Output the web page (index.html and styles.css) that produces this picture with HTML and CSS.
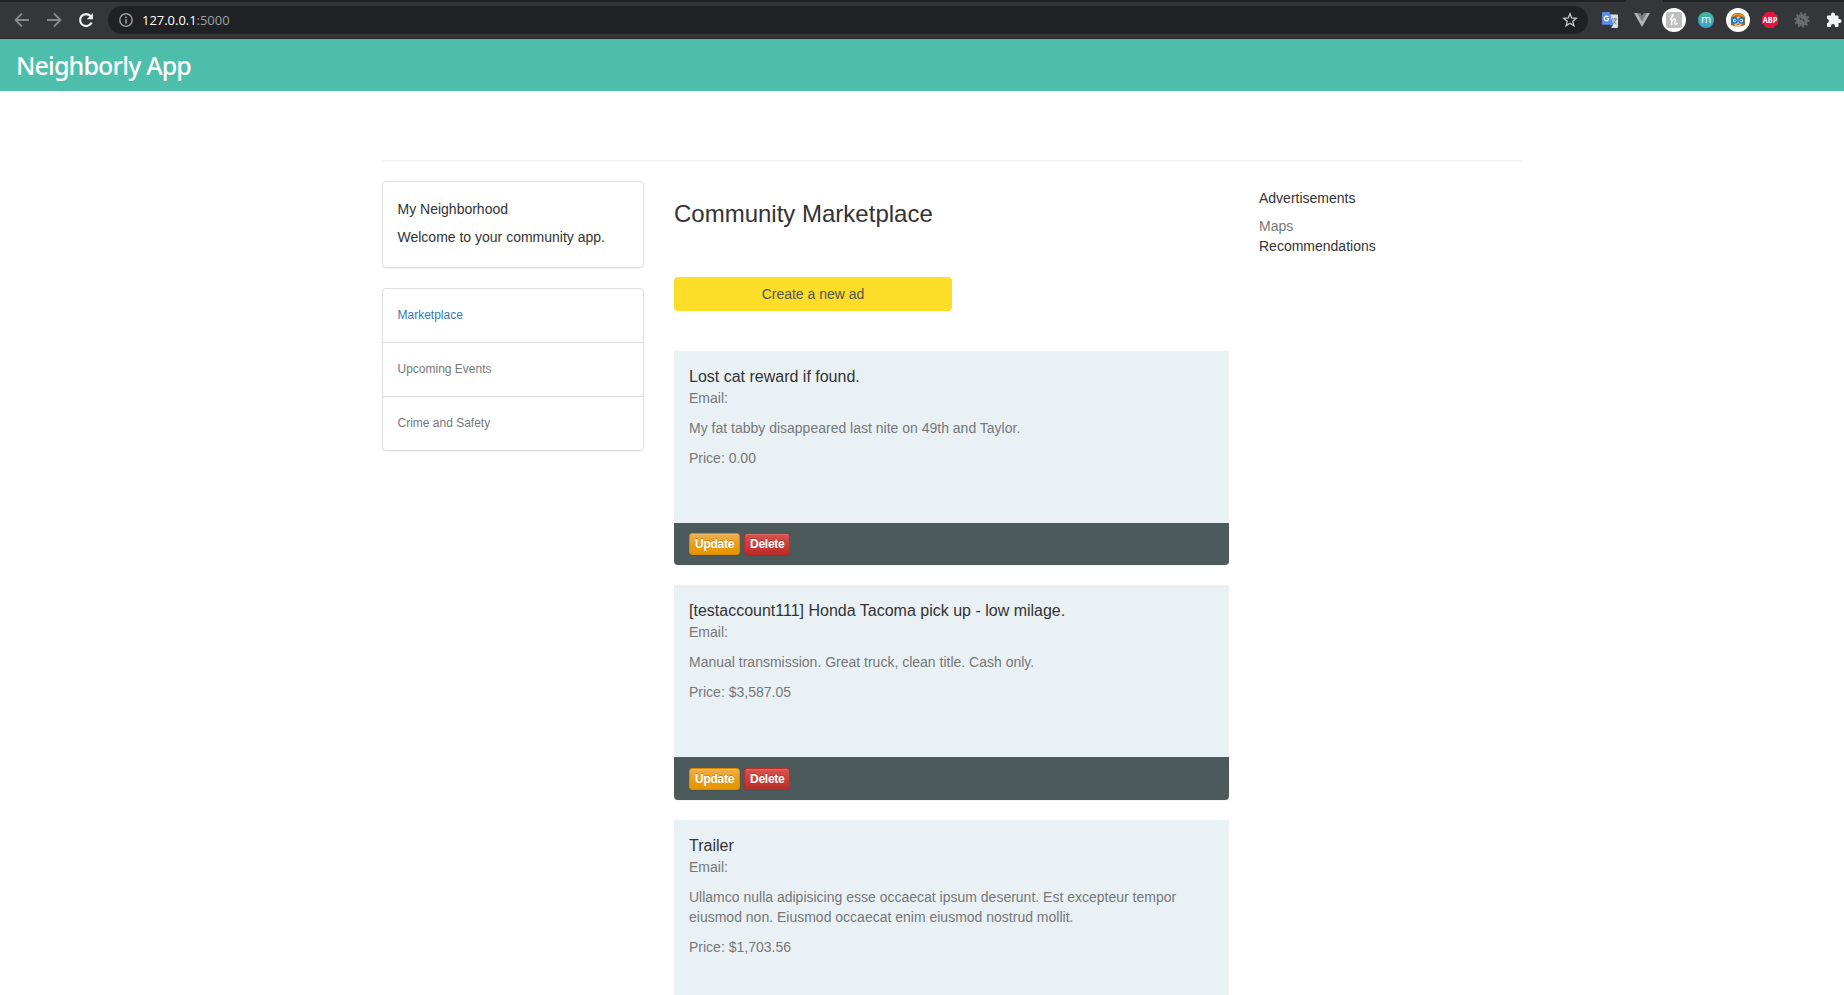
FILE: index.html
```html
<!DOCTYPE html>
<html lang="en">
<head>
<meta charset="utf-8">
<title>Neighborly App</title>
<link rel="stylesheet" href="styles.css">
</head>
<body>
<div class="toolbar">
  <svg class="icon back" viewBox="0 0 16 16"><path d="M15 8H2M8 1.5L1.5 8L8 14.5" fill="none" stroke="#87898c" stroke-width="1.8"/></svg>
  <svg class="icon fwd" viewBox="0 0 16 16"><path d="M1 8H14M8 1.5L14.500 8L8 14.500" fill="none" stroke="#87898c" stroke-width="1.8"/></svg>
  <svg class="icon reload" viewBox="0 0 16 16"><path d="M13.600 10.500A6 6 0 1 1 12.500 4" fill="none" stroke="#f1f3f4" stroke-width="2.100"/><path d="M15 1V7.200H8.800Z" fill="#f1f3f4"/></svg>
  <div class="omnibox">
    <svg class="icon info" viewBox="0 0 16 16"><circle cx="8" cy="8" r="6.200" fill="none" stroke="#9aa0a6" stroke-width="1.400"/><path d="M8 7.200V11.500M8 4.400V6" stroke="#9aa0a6" stroke-width="1.600"/></svg>
    <span class="url"><b>127.0.0.1</b>:5000</span>
    <svg class="icon star" viewBox="0 0 16 16"><path d="M8 1.700L9.700 6L14.300 6.300L10.800 9.300L11.900 13.800L8 11.300L4.100 13.800L5.200 9.300L1.700 6.300L6.300 6Z" fill="none" stroke="#c5c8cc" stroke-width="1.300"/></svg>
  </div>
  <div class="extensions">
    <svg viewBox="0 0 16 16" width="16" height="16"><path d="M6 2.500H15Q16 2.500 16 3.500V15Q16 16 15 16H9.500Z" fill="#dcdee1"/><path d="M10 7H15M12.500 5.800V7M14 7Q13 10.500 10.500 12M11 8.500Q12.500 11 14.500 12" fill="none" stroke="#6f7e88" stroke-width=".9"/><path d="M7.500 12.500H11.200L9.500 15.800Z" fill="#3058b8"/><path d="M1 0H7.500L11.500 12.700H1Q0 12.700 0 11.700V1Q0 0 1 0Z" fill="#5b8def"/><path d="M6.300 5A2.300 2.300 0 1 0 6.800 6.700H4.600" fill="none" stroke="#fff" stroke-width="1.200"/></svg>
    <svg viewBox="0 0 16 16" width="16" height="16"><path d="M0 1H6L8 4.500L10 1H16L8 15Z" fill="#b4b4b4"/><path d="M3 1H6L8 4.500L10 1H13L8 9.600Z" fill="#7d7d7d"/></svg>
    <svg viewBox="0 0 24 24" width="24" height="24"><circle cx="12" cy="12" r="12" fill="#fff"/><rect x="4" y="4" width="16" height="16" rx="2.500" fill="#bfbfbf"/><path d="M8 11.500Q11.300 9 11.300 6.800Q10 5.800 9.700 9V17M9.700 13.500Q12.800 9.500 13.300 11.800L12.800 15Q12.800 17.500 15.800 15" fill="none" stroke="#fff" stroke-width="1.300"/></svg>
    <svg viewBox="0 0 16 16" width="16" height="16"><defs><linearGradient id="mg" x2="0" y2="1"><stop stop-color="#43b89e"/><stop offset="1" stop-color="#38a4d2"/></linearGradient></defs><circle cx="8" cy="8" r="8" fill="url(#mg)"/><text x="8" y="11" class="m">m</text></svg>
    <svg viewBox="0 0 24 24" width="24" height="24"><circle cx="12" cy="12" r="12" fill="#fff"/><path d="M5 17V10Q5.500 5 12 5Q18.500 5 19 10V17L15.500 18.300H8.500Z" fill="#a9660f"/><path d="M7 10.500Q10 10 13 8Q15 10 17 10.500V14Q15.500 18.500 12 18.800Q8.500 18.500 7 14Z" fill="#f7b98c"/><path d="M6 8.500Q12 4.500 18 8.500" fill="none" stroke="#dda03c" stroke-width="1.500"/><circle cx="8.600" cy="12.500" r="2.500" fill="#dbe9f5" stroke="#1676d2" stroke-width="1.400"/><circle cx="15.400" cy="12.500" r="2.500" fill="#dbe9f5" stroke="#1676d2" stroke-width="1.400"/><circle cx="9" cy="12.500" r=".8" fill="#245a8c"/><circle cx="15" cy="12.500" r=".8" fill="#245a8c"/><path d="M10.800 16.300H13.200" stroke="#8a4a20" stroke-width=".9"/></svg>
    <svg viewBox="0 0 16 16" width="16" height="16"><path d="M4.700 0H11.300L16 4.700V11.300L11.300 16H4.700L0 11.300V4.700Z" fill="#e2163f"/><text x="8" y="10.900" class="abp" textLength="14.500" lengthAdjust="spacingAndGlyphs">ABP</text></svg>
    <svg viewBox="0 0 16 16" width="16" height="16"><circle cx="8" cy="8" r="6" fill="#6b6b6d"/><circle cx="8" cy="8" r="6.700" fill="none" stroke="#6b6b6d" stroke-width="2" stroke-dasharray="1.900 2.310"/><path d="M5.800 5.500L7.300 8M8.800 7L10.300 9.500" stroke="#3b3c3f" stroke-width="1.300"/></svg>
    <svg viewBox="0 0 16 16" width="16" height="16"><path d="M1 4.500Q1 3.500 2 3.500H5V2.500A2 2 0 0 1 9 2.500V3.500H11.500Q12.500 3.500 12.500 4.500V7H13.500A2 2 0 0 1 13.500 11H12.500V14Q12.500 15 11.500 15H9V14A2 2 0 0 0 5 14V15H2Q1 15 1 14V11A2 2 0 0 0 1 7Z" fill="#f1f3f4"/></svg>
  </div>
</div>
<header class="navbar"><span class="brand">Neighborly App</span></header>
<main class="container">
  <hr>
  <div class="row">
    <aside class="side">
      <section class="panel welcome"><h5>My Neighborhood</h5><p>Welcome to your community app.</p></section>
      <nav class="panel menu"><a class="active">Marketplace</a><a>Upcoming Events</a><a>Crime and Safety</a></nav>
    </aside>
    <section class="market">
      <h1>Community Marketplace</h1>
      <a class="create">Create a new ad</a>
      <article class="card">
        <div class="card-body"><h4>Lost cat reward if found.</h4><p>Email:</p><p>My fat tabby disappeared last nite on 49th and Taylor.</p><p>Price: 0.00</p></div>
        <footer><a class="btn update">Update</a><a class="btn delete">Delete</a></footer>
      </article>
      <article class="card tall">
        <div class="card-body"><h4>[testaccount111] Honda Tacoma pick up - low milage.</h4><p>Email:</p><p>Manual transmission. Great truck, clean title. Cash only.</p><p>Price: $3,587.05</p></div>
        <footer><a class="btn update">Update</a><a class="btn delete">Delete</a></footer>
      </article>
      <article class="card">
        <div class="card-body"><h4>Trailer</h4><p>Email:</p><p>Ullamco nulla adipisicing esse occaecat ipsum deserunt. Est excepteur tempor eiusmod non. Eiusmod occaecat enim eiusmod nostrud mollit.</p><p>Price: $1,703.56</p></div>
      </article>
    </section>
    <aside class="ads"><h5>Advertisements</h5><p class="muted">Maps</p><p>Recommendations</p></aside>
  </div>
</main>
</body>
</html>
```

FILE: styles.css
```css
* { box-sizing: border-box; }
html, body { height: 995px; overflow: hidden; }
body { margin: 0; background: #fff; color: #333; font: 14px/20px "Liberation Sans", Arial, sans-serif; }
h1, h4, h5, p { margin: 0; font-weight: 400; }
svg { display: block; flex: none; }

/* The strip along the top opens where the active tab meets the toolbar. */
.toolbar { display: flex; align-items: center; height: 39px; padding: 2px 0 0 14px; border-bottom: 1px solid #27282b; background: linear-gradient(90deg, #202124 1626px, #35363a 1626px, #35363a 1663px, #202124 1663px) 0 0 / 100% 2px no-repeat #35363a; }
.icon { width: 16px; height: 16px; }
.fwd { margin-left: 16px; }
.reload { margin-left: 16px; }
.omnibox { display: flex; flex: none; align-items: center; width: 1480px; height: 28px; margin-left: 14px; padding: 0 10px; border-radius: 14px; background: #202124; }
.url { flex: 1; margin-left: 8px; color: #9aa0a6; font: 13px/28px "Open Sans", sans-serif; letter-spacing: -.03px; }
.url b { color: #fff; font-weight: 400; }
.extensions { display: flex; flex: none; align-items: center; gap: 16px; margin-left: 14px; }
.extensions svg:nth-child(3), .extensions svg:nth-child(5) { margin: 0 -4px; }
.m { fill: #fff; font: 11px "Open Sans", sans-serif; text-anchor: middle; }
.abp { fill: #fff; font: bold 8px "Open Sans", sans-serif; text-anchor: middle; }

.navbar { height: 52px; padding-left: 16px; background: #4dbdac; }
.brand { color: #fff; font: 500 25px/53px "Noto Sans", sans-serif; letter-spacing: -.85px; }

.container { width: 1140px; margin-left: 382px; padding-top: 69px; }
hr { height: 1px; margin: 0 0 20px; border: 0; background: #eee; }
.row { display: grid; grid-template-columns: 262px 555px 262.5px; column-gap: 30px; align-items: start; }

.panel { border: 1px solid #ddd; border-radius: 4px; box-shadow: 0 1px 1px rgba(0, 0, 0, .05); }
.welcome { height: 87px; margin-bottom: 20px; padding: 17px 14.5px; }
.welcome h5 { margin-bottom: 8px; font-size: 14px; }
.menu a { display: block; height: 54px; padding-left: 14.5px; border-bottom: 1px solid #ddd; color: #777; font-size: 12px; line-height: 52px; }
.menu a:last-child { height: 53px; border-bottom: 0; }
.menu .active { color: #337ab7; }

h1 { padding-top: 20px; font-size: 24px; line-height: 26px; }
.create { display: block; width: 278px; height: 34px; margin: 50px 0 40px; border-radius: 4px; background: #fcdd28; color: #555; text-align: center; line-height: 34px; }
.card { margin-bottom: 20px; border-radius: 0 0 4px 4px; overflow: hidden; box-shadow: 0 1px 1px rgba(0, 0, 0, .05); }
.card-body { min-height: 172px; padding: 15px 15px 39px; background: #e9f1f5; color: #777; }
.card-body h4 { margin-bottom: 1px; color: #333; font-size: 16px; line-height: 21px; }
.card-body p { margin-bottom: 10px; }
.card footer { display: flex; gap: 4px; height: 42px; padding: 10px 15px; background: #4d5a5b; }
.card.tall footer { height: 43px; padding-top: 11px; }
.btn { height: 22px; padding: 0 5px; border: 1px solid; border-radius: 3px; color: #fff; font-size: 12px; font-weight: 700; line-height: 20px; letter-spacing: -.25px; text-shadow: 0 -1px 0 rgba(0, 0, 0, .2); box-shadow: inset 0 1px 0 rgba(255, 255, 255, .15), 0 1px 1px rgba(0, 0, 0, .075); }
.update { width: 51px; border-color: #d88b00; background: linear-gradient(#f0ad4e, #e89a05 70%, #e79500); }
.delete { width: 46px; border-color: #b92c28; background: linear-gradient(#d9534f, #b92c28); }

.ads { padding-top: 7px; }
.ads h5 { margin-bottom: 8px; font-size: 14px; }
.muted { color: #777; }
```
